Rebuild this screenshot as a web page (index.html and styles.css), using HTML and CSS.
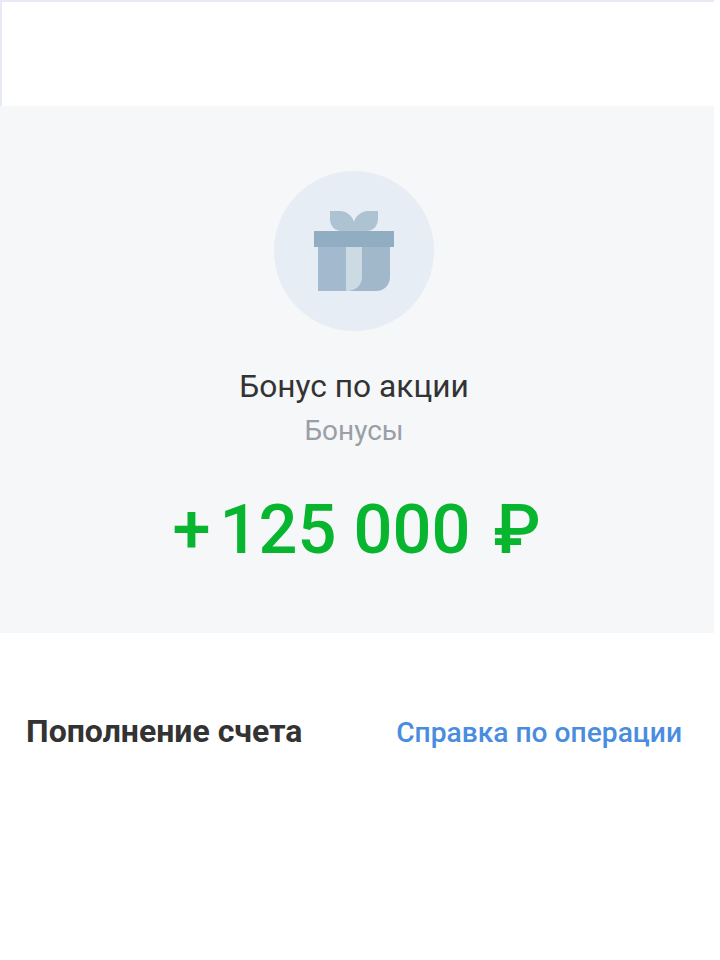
FILE: index.html
```html
<!DOCTYPE html>
<html lang="ru">
<head>
<meta charset="utf-8">
<title>Бонус по акции</title>
<link rel="stylesheet" href="styles.css">
</head>
<body>
<div class="page">
  <header class="top"></header>
  <section class="hero">
    <div class="badge">
      <svg class="gift" width="80" height="80" viewBox="0 0 80 80" aria-hidden="true">
        <path class="leaf" d="M16 0H26C32 0 38 4 40 11C42 4 48 0 54 0H64V8C64 15 59 20 53 20H27C21 20 16 15 16 8Z"/>
        <path class="box-left" d="M4 36H36V80H4Z"/>
        <path class="box-right" d="M32 36H76V66C76 74 70 80 62 80H32Z"/>
        <path class="ribbon" d="M32 36H48V66C48 74 42 80 32 80Z"/>
        <rect class="lid" x="0" y="20" width="80" height="16"/>
      </svg>
    </div>
    <h1 class="title">Бонус по акции</h1>
    <p class="subtitle">Бонусы</p>
    <p class="amount">+<span class="digits">125 000</span><span class="rub">₽</span></p>
  </section>
  <section class="row">
    <h2 class="row-title">Пополнение счета</h2>
    <a class="row-link" href="#">Справка по операции</a>
  </section>
</div>
</body>
</html>
```
FILE: styles.css
```css
* { box-sizing: border-box; }
html, body { margin: 0; padding: 0; background: #fff; }
body { font-family: Roboto, "Noto Sans", sans-serif; color: #333; }
.page { width: 714px; height: 960px; }
.top {
  height: 106px;
  border-top: 2px solid #e9e9f6;
  border-left: 2px solid #e9e9f6;
}
.hero {
  height: 527px;
  background: #f5f7f9;
  display: flex;
  flex-direction: column;
  align-items: center;
  padding: 65px 6px 0 0;
}
.badge {
  width: 160px;
  height: 160px;
  border-radius: 50%;
  background: #e7edf4;
  display: flex;
  align-items: center;
  justify-content: center;
}
.gift { display: block; }
.leaf { fill: #aec3d1; }
.box-left { fill: #a3b9cd; }
.box-right { fill: #a1b8cb; }
.ribbon { fill: #ccdae4; }
.lid { fill: #90adc2; }
.title {
  margin: 37px 0 0;
  font-size: 31.7px;
  line-height: 38px;
  font-weight: 400;
  color: #333;
}
.subtitle {
  margin: 9px 0 0;
  font-size: 28px;
  line-height: 32px;
  color: #9a9ea6;
}
.amount {
  margin: 41px 0 0 5px;
  font-size: 68.6px;
  line-height: 84px;
  font-weight: 500;
  color: #07b52f;
  white-space: nowrap;
}
.digits { margin-left: 9px; }
.rub { margin-left: 23px; }
.row {
  display: flex;
  justify-content: space-between;
  align-items: center;
  padding: 76px 32px 0 26px;
}
.row-title {
  margin: 0;
  font-size: 32px;
  line-height: 40px;
  font-weight: 700;
  color: #333;
}
.row-link {
  margin-top: 4px;
  font-size: 28.2px;
  line-height: 40px;
  font-weight: 500;
  color: #4a8ddf;
  text-decoration: none;
}
```
